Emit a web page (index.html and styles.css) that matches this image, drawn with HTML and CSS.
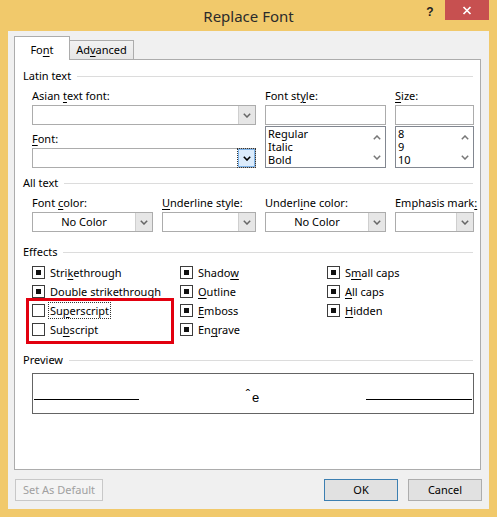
FILE: index.html
```html
<!DOCTYPE html>
<html>
<head>
<meta charset="utf-8">
<title>Replace Font</title>
<link rel="stylesheet" href="styles.css">
</head>
<body>
<div class="window">
  <div class="titlebar">
    <div class="tb-side"></div>
    <div class="title">Replace Font</div>
    <div class="tb-side tb-right">
      <span class="help">?</span>
      <span class="close"><svg width="10" height="9" viewBox="0 0 10 9"><path d="M1.5 1 L8.5 8 M8.5 1 L1.5 8" stroke="#fff" stroke-width="1.7" fill="none"/></svg></span>
    </div>
  </div>
  <div class="client">
    <div class="tabs">
      <div class="tab active">Fo<u>n</u>t</div>
      <div class="tab inactive">Ad<u>v</u>anced</div>
    </div>
    <div class="panel">
      <div class="group-h">Latin text</div>
      <div class="section latin">
        <div class="col">
          <div class="lbl">Asian <u>t</u>ext font:</div>
          <div class="select"><div class="val"></div><div class="arrow"><svg width="8" height="5" viewBox="0 0 8 5"><polyline points="0.8,0.8 4,4 7.2,0.8" fill="none" stroke="#666" stroke-width="1.5"/></svg></div></div>
          <div class="lbl gap6"><u>F</u>ont:</div>
          <div class="select"><div class="val"></div><div class="arrow focus"><svg width="8" height="5" viewBox="0 0 8 5"><polyline points="0.8,0.8 4,4 7.2,0.8" fill="none" stroke="#000" stroke-width="1.6"/></svg></div></div>
        </div>
        <div class="col">
          <div class="lbl">Font st<u>y</u>le:</div>
          <div class="tbox"></div>
          <div class="list">
            <div class="items"><div>Regular</div><div>Italic</div><div>Bold</div></div>
            <div class="sb">
              <div><svg width="8" height="5" viewBox="0 0 8 5"><polyline points="0.8,4.2 4,1 7.2,4.2" fill="none" stroke="#777" stroke-width="1.5"/></svg></div>
              <div><svg width="8" height="5" viewBox="0 0 8 5"><polyline points="0.8,0.8 4,4 7.2,0.8" fill="none" stroke="#777" stroke-width="1.5"/></svg></div>
            </div>
          </div>
        </div>
        <div class="col">
          <div class="lbl"><u>S</u>ize:</div>
          <div class="tbox"></div>
          <div class="list">
            <div class="items"><div>8</div><div>9</div><div>10</div></div>
            <div class="sb">
              <div><svg width="8" height="5" viewBox="0 0 8 5"><polyline points="0.8,4.2 4,1 7.2,4.2" fill="none" stroke="#777" stroke-width="1.5"/></svg></div>
              <div><svg width="8" height="5" viewBox="0 0 8 5"><polyline points="0.8,0.8 4,4 7.2,0.8" fill="none" stroke="#777" stroke-width="1.5"/></svg></div>
            </div>
          </div>
        </div>
      </div>

      <div class="group-h mt7">All text</div>
      <div class="section alltext">
        <div class="col">
          <div class="lbl">Font <u>c</u>olor:</div>
          <div class="select"><div class="val">No Color</div><div class="arrow"><svg width="8" height="5" viewBox="0 0 8 5"><polyline points="0.8,0.8 4,4 7.2,0.8" fill="none" stroke="#666" stroke-width="1.5"/></svg></div></div>
        </div>
        <div class="col">
          <div class="lbl"><u>U</u>nderline style:</div>
          <div class="select"><div class="val"></div><div class="arrow"><svg width="8" height="5" viewBox="0 0 8 5"><polyline points="0.8,0.8 4,4 7.2,0.8" fill="none" stroke="#666" stroke-width="1.5"/></svg></div></div>
        </div>
        <div class="col">
          <div class="lbl">Underl<u>i</u>ne color:</div>
          <div class="select"><div class="val">No Color</div><div class="arrow"><svg width="8" height="5" viewBox="0 0 8 5"><polyline points="0.8,0.8 4,4 7.2,0.8" fill="none" stroke="#666" stroke-width="1.5"/></svg></div></div>
        </div>
        <div class="col">
          <div class="lbl">Emphasis mark<u>:</u></div>
          <div class="select"><div class="val"></div><div class="arrow"><svg width="8" height="5" viewBox="0 0 8 5"><polyline points="0.8,0.8 4,4 7.2,0.8" fill="none" stroke="#666" stroke-width="1.5"/></svg></div></div>
        </div>
      </div>

      <div class="group-h mt12">Effects</div>
      <div class="section effects">
        <div class="ecol">
          <div class="cb"><span class="box on"></span><span>Stri<u>k</u>ethrough</span></div>
          <div class="cb"><span class="box on"></span><span>Dou<u>b</u>le strikethrough</span></div>
          <div class="cb"><span class="box"></span><span class="focus">Su<u>p</u>erscript</span></div>
          <div class="cb"><span class="box"></span><span>Su<u>b</u>script</span></div>
        </div>
        <div class="ecol">
          <div class="cb"><span class="box on"></span><span>Shado<u>w</u></span></div>
          <div class="cb"><span class="box on"></span><span><u>O</u>utline</span></div>
          <div class="cb"><span class="box on"></span><span><u>E</u>mboss</span></div>
          <div class="cb"><span class="box on"></span><span>En<u>g</u>rave</span></div>
        </div>
        <div class="ecol">
          <div class="cb"><span class="box on"></span><span>S<u>m</u>all caps</span></div>
          <div class="cb"><span class="box on"></span><span><u>A</u>ll caps</span></div>
          <div class="cb"><span class="box on"></span><span><u>H</u>idden</span></div>
        </div>
      </div>

      <div class="group-h mt13">Preview</div>
      <div class="section">
        <div class="preview">
          <div class="pline left"></div>
          <div class="ptext"><span class="circ">ˆ</span>e</div>
          <div class="pline right"></div>
        </div>
      </div>

      <div class="highlight"></div>
    </div>
    <div class="buttons">
      <div class="btn disabled">Set As Default</div>
      <div class="btn ok">OK</div>
      <div class="btn">Cancel</div>
    </div>
  </div>
</div>
</body>
</html>
```
FILE: styles.css
```css
* { box-sizing: border-box; }
html, body { margin: 0; padding: 0; }
body {
  background: #F1C96B;
  font-family: "Noto Sans", "Open Sans", sans-serif;
  font-size: 11px;
  color: #000;
}
u { text-underline-offset: 2px; text-decoration-thickness: 1px; }

.window {
  width: 497px;
  height: 517px;
  background: #F1C96B;
  display: flex;
  flex-direction: column;
}

.titlebar {
  height: 31px;
  flex: none;
  display: grid;
  grid-template-columns: 1fr auto 1fr;
}
.title {
  font-size: 15px;
  line-height: 32px;
  color: #2B2B2B;
}
.tb-right {
  display: flex;
  justify-content: flex-end;
  align-items: flex-start;
  padding-right: 8px;
}
.help {
  width: 30px;
  height: 20px;
  text-align: center;
  font-family: "Liberation Sans", sans-serif;
  font-weight: bold;
  font-size: 12px;
  line-height: 20px;
  padding-top: 2px;
  color: #222;
}
.close {
  width: 44px;
  height: 20px;
  background: #C75050;
  display: flex;
  align-items: center;
  justify-content: center;
  padding-top: 1px;
}

.client {
  flex: 1;
  margin: 0 8px 8px;
  background: #F0F0F0;
  display: flex;
  flex-direction: column;
}

.tabs {
  height: 28px;
  flex: none;
  display: flex;
  align-items: flex-end;
  padding-left: 6px;
}
.tab {
  border: 1px solid #ACACAC;
  border-bottom: none;
  text-align: center;
  line-height: 16px;
}
.tab.active {
  width: 56px;
  height: 24px;
  padding-top: 5px;
  background: #fff;
  margin-bottom: -1px;
  position: relative;
  z-index: 1;
}
.tab.inactive {
  width: 65px;
  height: 19px;
  margin-left: -1px;
  padding-top: 1px;
  background: linear-gradient(#F2F2F2, #E6E6E6);
}

.panel {
  flex: none;
  margin-left: 6px;
  width: 467px;
  height: 411px;
  border: 1px solid #ACACAC;
  background: #fff;
  padding: 8px 6px 0 8px;
  position: relative;
}

.group-h {
  display: flex;
  align-items: center;
  height: 16px;
  line-height: 16px;
}
.group-h::after {
  content: "";
  flex: 1;
  height: 1px;
  background: #DCDCDC;
  margin-left: 6px;
  margin-right: 1px;
}
.mt7 { margin-top: 7px; }
.mt12 { margin-top: 12px; }
.mt13 { margin-top: 13px; }

.section { padding-left: 9px; }

.latin {
  margin-top: 4px;
  display: grid;
  grid-template-columns: 224px 121px 79px;
  column-gap: 9px;
}
.alltext {
  margin-top: 4px;
  display: grid;
  grid-template-columns: 121px 94px 121px 79px;
  column-gap: 9px;
}
.col { display: flex; flex-direction: column; }
.lbl {
  line-height: 16px;
  height: 16px;
  margin-bottom: 1px;
  white-space: nowrap;
}
.gap6 { margin-top: 6px; }

.select {
  height: 20px;
  border: 1px solid #ACACAC;
  background: #fff;
  display: flex;
}
.select .val {
  flex: 1;
  text-align: center;
  line-height: 18px;
}
.select .arrow {
  width: 17px;
  background: #E6E6E6;
  border-left: 1px solid #CFCFCF;
  display: flex;
  align-items: center;
  justify-content: center;
}
.select .arrow.focus {
  background: #DCECFC;
  border: 1px solid #7EB4EA;
}

.tbox {
  height: 20px;
  border: 1px solid #ACACAC;
  background: #fff;
}
.list {
  height: 42px;
  margin-top: 1px;
  border: 1px solid #828790;
  background: #fff;
  display: flex;
}
.items {
  flex: 1;
  padding-left: 2px;
  line-height: 13px;
}
.sb {
  width: 17px;
  display: flex;
  flex-direction: column;
}
.sb div {
  height: 20px;
  display: flex;
  align-items: center;
  justify-content: center;
}

.effects {
  margin-top: 3px;
  display: flex;
}
.ecol {
  width: 151px;
  display: flex;
  flex-direction: column;
}
.ecol + .ecol { width: 150px; }
.cb {
  height: 19px;
  display: flex;
  align-items: center;
  line-height: 19px;
  white-space: nowrap;
}
.box {
  width: 13px;
  height: 13px;
  border: 1px solid #3C3C3C;
  background: #fff;
  margin-right: 5px;
  padding: 3px;
  flex: none;
}
.box.on::before {
  content: "";
  display: block;
  width: 5px;
  height: 5px;
  background: #111;
}
.focus {
  line-height: 15px;
  outline: 1px dotted #333;
  padding: 0 1px;
  margin-left: -1px;
}

.preview {
  margin-top: 5px;
  height: 41px;
  border: 1px solid #646464;
  background: #fff;
  display: flex;
  align-items: flex-start;
}
.pline {
  height: 26px;
  border-bottom: 1px solid #000;
}
.pline.left { width: 105px; margin-left: 1px; }
.pline.right { width: 106px; margin-right: 1px; }
.ptext {
  flex: 1;
  text-align: center;
  font-family: "Liberation Sans", sans-serif;
  font-size: 13px;
  line-height: 15px;
  padding-top: 13px;
}
.circ {
  vertical-align: 3px;
  margin-right: 2px;
}

.highlight {
  position: absolute;
  left: 11px;
  top: 238px;
  width: 148px;
  height: 46px;
  border: 3px solid #E2000F;
}

.buttons {
  flex: none;
  margin-top: 9px;
  padding: 0 7px;
  display: flex;
}
.btn {
  height: 22px;
  width: 74px;
  border: 1px solid #ADADAD;
  background: #E1E1E1;
  text-align: center;
  line-height: 20px;
}
.btn.disabled {
  width: 88px;
  margin-right: auto;
  background: #F4F4F4;
  border-color: #C8C8C8;
  color: #A0A0A0;
}
.btn.ok {
  border-color: #3C7FB1;
  margin-right: 10px;
}
```
